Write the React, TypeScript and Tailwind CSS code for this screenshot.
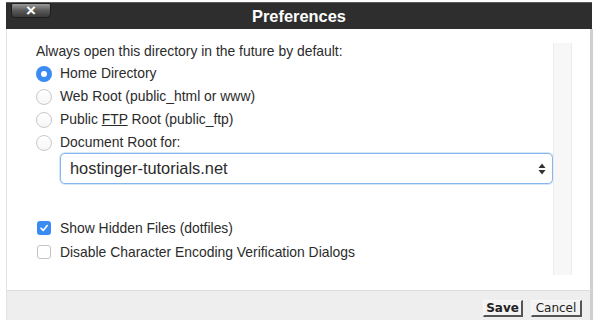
const font = { fontFamily: '"Liberation Sans", Arial, sans-serif' };
const btnFont = { fontFamily: '"DejaVu Sans", Verdana, sans-serif' };

type RadioProps = { label: React.ReactNode; checked?: boolean };

function Radio({ label, checked = false }: RadioProps) {
  return (
    <div className="flex h-[23px] items-center">
      {checked ? (
        <span className="flex h-[16px] w-[16px] items-center justify-center rounded-full bg-[#3b8cf2]">
          <span className="h-[6px] w-[6px] rounded-full bg-white" />
        </span>
      ) : (
        <span className="h-[16px] w-[16px] rounded-full border border-[#c9c9c9] bg-gradient-to-b from-white to-[#f6f6f6]" />
      )}
      <span className="ml-[8px] text-[13.9px] text-[#2b2b2b]">{label}</span>
    </div>
  );
}

function Checkbox({ label, checked = false }: { label: string; checked?: boolean }) {
  return (
    <div className="flex h-[24px] items-center pl-[1px]">
      {checked ? (
        <span className="flex h-[14px] w-[14px] items-center justify-center rounded-[3px] bg-[#3b8cf2]">
          <svg width="10" height="10" viewBox="0 0 10 10" fill="none">
            <path d="M2 5.2 L4.2 7.4 L8.2 2.6" stroke="white" strokeWidth="1.6" strokeLinecap="round" strokeLinejoin="round" />
          </svg>
        </span>
      ) : (
        <span className="h-[14px] w-[14px] rounded-[3px] border border-[#c4c4c4] bg-white" />
      )}
      <span className="ml-[9px] text-[13.9px] text-[#2b2b2b]">{label}</span>
    </div>
  );
}

export default function App() {
  return (
    <div className="h-[323px] w-[602px] bg-white pt-[2px]" style={font}>
      <div className="ml-[6px] w-[587px]">
        {/* title bar */}
        <div className="relative flex h-[27px] w-[586px] items-center justify-center border-t border-[#5a5a5a] bg-[#2e2e2e]">
          <button className="absolute left-[5px] top-[0px] flex h-[15px] w-[40px] items-center justify-center rounded-b-[4px] rounded-t-[2px] border border-[#1e1e1e] bg-gradient-to-b from-[#9a9a9a] via-[#5a5a5a] to-[#3a3a3a] text-[17px] font-bold leading-none text-white">
            ×
          </button>
          <span className="text-[16.4px] font-bold text-white">Preferences</span>
        </div>

        {/* body */}
        <div className="flex h-[261px] border-l border-r-[3px] border-l-[#e2e2e2] border-r-[#cfcfcf] bg-white">
          <div className="flex-1 pl-[29px] pt-[12px]">
            <div className="flex h-[20px] items-center text-[13.9px] text-[#2b2b2b]">
              Always open this directory in the future by default:
            </div>
            <div className="mt-[1px]">
              <Radio label="Home Directory" checked />
              <Radio label="Web Root (public_html or www)" />
              <Radio
                label={
                  <>
                    Public <span className="underline">FTP</span> Root (public_ftp)
                  </>
                }
              />
              <Radio label="Document Root for:" />
            </div>
            <div className="ml-[24px] mt-[-1px] flex h-[31px] items-center justify-between rounded-[5px] border border-[#86b6ec] bg-white pl-[9px] pr-[6px] shadow-[0_0_0_1px_rgba(134,182,236,0.35)]">
              <span className="text-[16.4px] text-[#2b2b2b]">hostinger-tutorials.net</span>
              <svg width="8" height="14" viewBox="0 0 8 14">
                <path d="M4 1.5 L7.5 6 H0.5 Z" fill="#333" />
                <path d="M4 12.5 L7.5 8 H0.5 Z" fill="#333" />
              </svg>
            </div>
            <div className="mt-[32px]">
              <Checkbox label="Show Hidden Files (dotfiles)" checked />
              <Checkbox label="Disable Character Encoding Verification Dialogs" />
            </div>
          </div>
          <div className="mb-[15px] mr-[18px] mt-[14px] w-[19px] border-x border-[#ececec] bg-[#f7f7f7]" />
        </div>

        {/* footer */}
        <div
          className="flex h-[30px] items-end justify-end gap-[8px] border-l border-r-[3px] border-t border-l-[#e2e2e2] border-r-[#cfcfcf] border-t-[#dcdcdc] bg-[#eeeeee] pb-[3px] pr-[8px]"
          style={btnFont}
        >
          <button className="h-[17px] w-[40px] border border-b-2 border-r-2 border-b-[#555] border-l-[#f8f8f8] border-r-[#555] border-t-[#f8f8f8] bg-[#f3f3f3] text-[12px] font-bold leading-none text-[#222]">
            Save
          </button>
          <button className="h-[17px] w-[51px] border border-b-2 border-r-2 border-b-[#555] border-l-[#f8f8f8] border-r-[#555] border-t-[#f8f8f8] bg-[#f3f3f3] text-[12px] leading-none text-[#222]">
            Cancel
          </button>
        </div>
      </div>
    </div>
  );
}
